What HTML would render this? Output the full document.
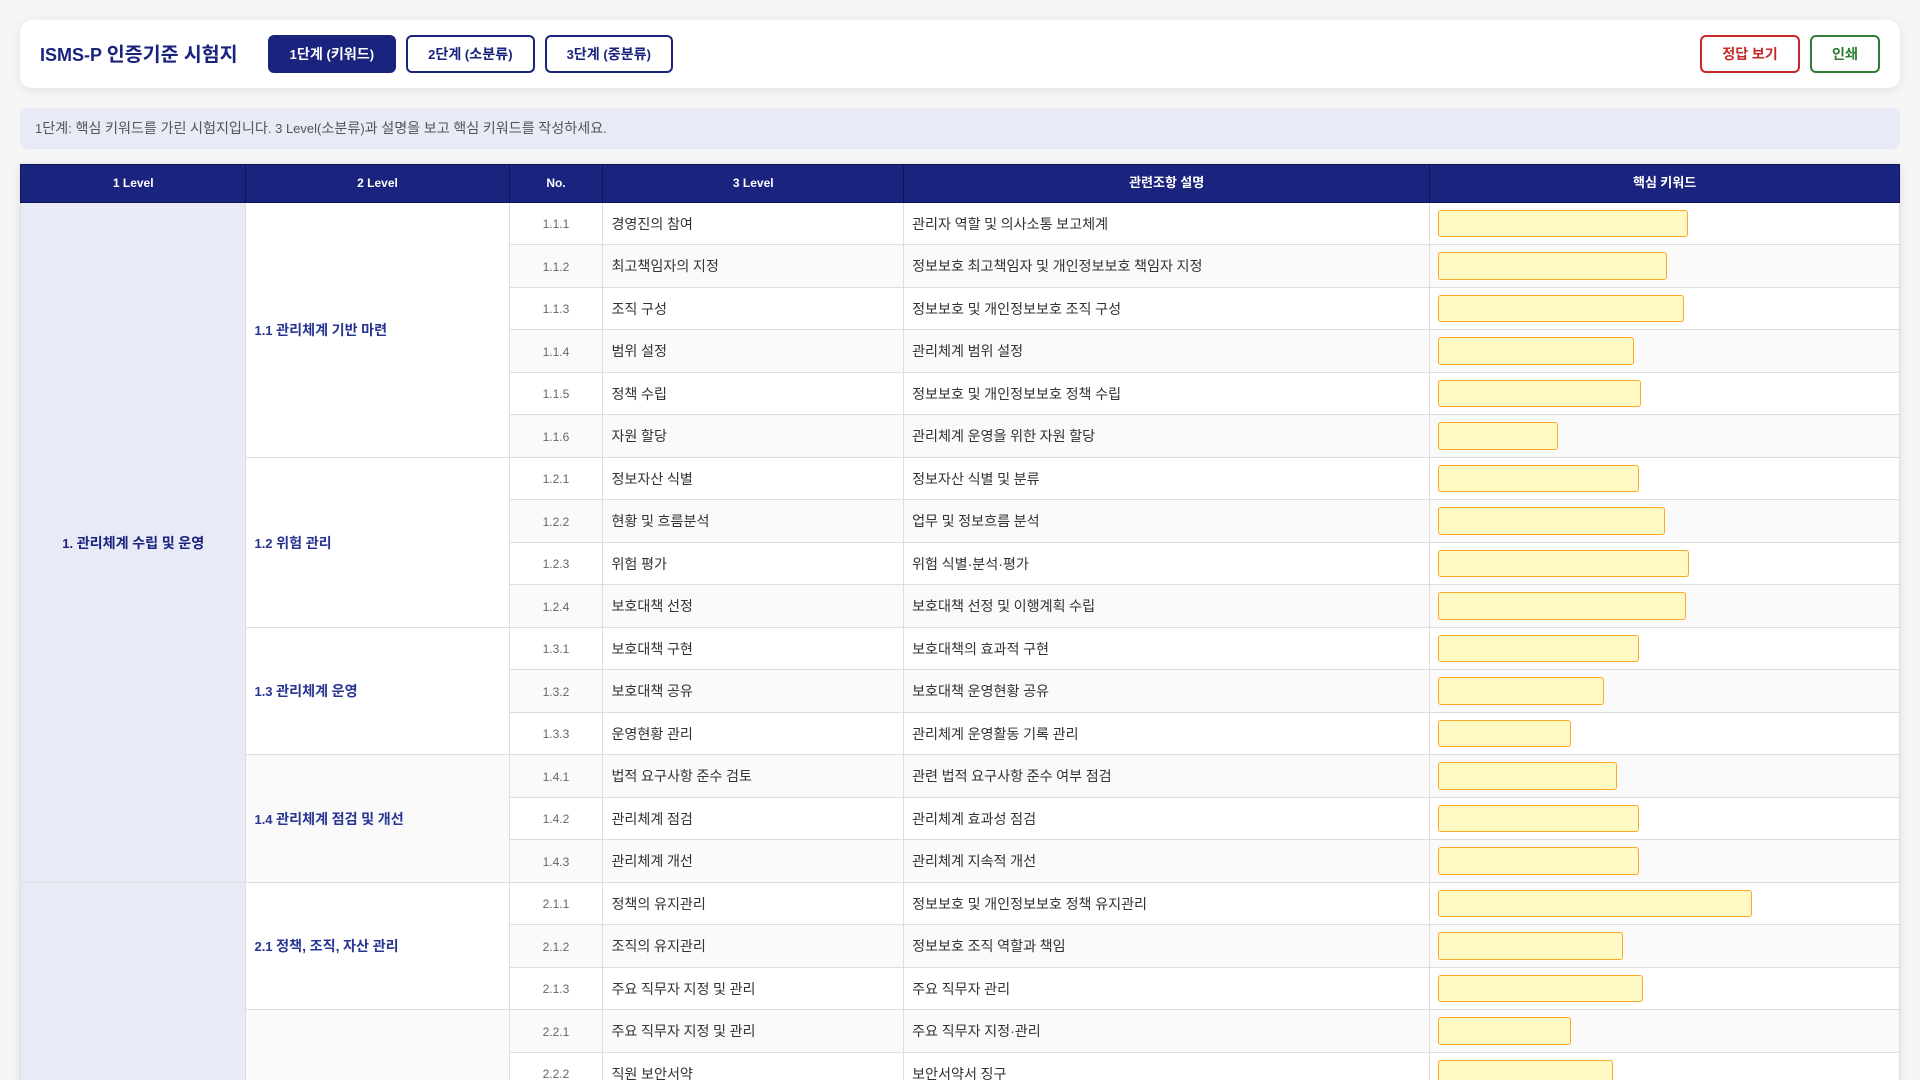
<!DOCTYPE html>
<html lang="ko"><head><meta charset="utf-8"><title>ISMS-P 인증기준 시험지</title>
<style>
*{box-sizing:border-box;margin:0;padding:0}
html,body{width:1920px;height:1080px;overflow:hidden}
body{background:#f5f5f5;padding:20px;font-family:"Liberation Sans","Noto Sans CJK KR",sans-serif;color:#333;font-size:13px}
i{font-style:normal;font-size:1.0865em;word-spacing:-.35px;line-height:1}
.hd{display:flex;align-items:center;height:68px;background:#fff;border-radius:12px;padding:0 20px;box-shadow:0 2px 10px rgba(0,0,0,.08)}
h1{font-size:18px;font-weight:700;color:#1a237e;margin-right:30px;line-height:24px;white-space:nowrap;position:relative;top:.5px}
.b{height:38px;border:2px solid #1a237e;border-radius:6px;background:#fff;color:#1a237e;font:700 13px "Liberation Sans","Noto Sans CJK KR",sans-serif;padding:0 20px;margin-right:10px;white-space:nowrap}
.b.on{background:#1a237e;color:#fff}
.sp{flex:1}
.r{border-color:#c62828;color:#c62828}
.b.r{padding:0 20.3px}
.g{border-color:#2e7d32;color:#2e7d32;margin-right:0}
.info{margin-top:20px;height:41px;line-height:42px;background:#e8eaf6;border-radius:8px;padding:0 15px;color:#555;font-size:13px}
table{margin-top:15px;width:100%;table-layout:fixed;border-collapse:collapse;background:#fff;box-shadow:0 2px 8px rgba(0,0,0,.1)}
th{background:#1a237e;color:#fff;font-size:12px;font-weight:700;border:1px solid #0d1452;height:37.5px;padding:0 8px 1px;text-align:center}
td{border:1px solid #ddd;padding:8px 8px 6px;font-size:13px;color:#333;vertical-align:middle;white-space:nowrap}
tbody tr:nth-child(even){background:#fafafa}
td.l1{background:#e8eaf6;color:#1a237e;font-weight:700;text-align:center}
td.l2{color:#283593;font-weight:700}
td.n{text-align:center;color:#666;font-size:12px}
input{display:block;position:relative;top:-1px;height:27.5px;border:1px solid #ffa726;background:#fff9c4;border-radius:3px;padding:0 8px;font-size:13px;outline:0}
</style></head><body>
<div class="hd"><h1>ISMS-P <i>인증기준 시험지</i></h1><button class="b on">1<i>단계</i> (<i>키워드</i>)</button><button class="b">2<i>단계</i> (<i>소분류</i>)</button><button class="b">3<i>단계</i> (<i>중분류</i>)</button><div class="sp"></div><button class="b r"><i>정답 보기</i></button><button class="b g"><i>인쇄</i></button></div>
<div class="info">1<i>단계</i>: <i>핵심 키워드를 가린 시험지입니다</i>. 3 Level(<i>소분류</i>)<i>과 설명을 보고 핵심 키워드를 작성하세요</i>.</div>
<table><colgroup><col style="width:12%"><col style="width:14%"><col style="width:5%"><col style="width:16%"><col style="width:28%"><col style="width:25%"></colgroup>
<thead><tr><th>1 Level</th><th>2 Level</th><th>No.</th><th>3 Level</th><th><i>관련조항 설명</i></th><th><i>핵심 키워드</i></th></tr></thead>
<tbody>
<tr><td class="l1" rowspan="16">1. <i>관리체계 수립 및 운영</i></td><td class="l2" rowspan="6">1.1 <i>관리체계 기반 마련</i></td><td class="n">1.1.1</td><td><i>경영진의 참여</i></td><td><i>관리자 역할 및 의사소통 보고체계</i></td><td><input style="width:250px"></td></tr>
<tr><td class="n">1.1.2</td><td><i>최고책임자의 지정</i></td><td><i>정보보호 최고책임자 및 개인정보보호 책임자 지정</i></td><td><input style="width:229px"></td></tr>
<tr><td class="n">1.1.3</td><td><i>조직 구성</i></td><td><i>정보보호 및 개인정보보호 조직 구성</i></td><td><input style="width:246px"></td></tr>
<tr><td class="n">1.1.4</td><td><i>범위 설정</i></td><td><i>관리체계 범위 설정</i></td><td><input style="width:196px"></td></tr>
<tr><td class="n">1.1.5</td><td><i>정책 수립</i></td><td><i>정보보호 및 개인정보보호 정책 수립</i></td><td><input style="width:203px"></td></tr>
<tr><td class="n">1.1.6</td><td><i>자원 할당</i></td><td><i>관리체계 운영을 위한 자원 할당</i></td><td><input style="width:120px"></td></tr>
<tr><td class="l2" rowspan="4">1.2 <i>위험 관리</i></td><td class="n">1.2.1</td><td><i>정보자산 식별</i></td><td><i>정보자산 식별 및 분류</i></td><td><input style="width:201px"></td></tr>
<tr><td class="n">1.2.2</td><td><i>현황 및 흐름분석</i></td><td><i>업무 및 정보흐름 분석</i></td><td><input style="width:227px"></td></tr>
<tr><td class="n">1.2.3</td><td><i>위험 평가</i></td><td><i>위험 식별·분석·평가</i></td><td><input style="width:251px"></td></tr>
<tr><td class="n">1.2.4</td><td><i>보호대책 선정</i></td><td><i>보호대책 선정 및 이행계획 수립</i></td><td><input style="width:248px"></td></tr>
<tr><td class="l2" rowspan="3">1.3 <i>관리체계 운영</i></td><td class="n">1.3.1</td><td><i>보호대책 구현</i></td><td><i>보호대책의 효과적 구현</i></td><td><input style="width:201px"></td></tr>
<tr><td class="n">1.3.2</td><td><i>보호대책 공유</i></td><td><i>보호대책 운영현황 공유</i></td><td><input style="width:166px"></td></tr>
<tr><td class="n">1.3.3</td><td><i>운영현황 관리</i></td><td><i>관리체계 운영활동 기록 관리</i></td><td><input style="width:133px"></td></tr>
<tr><td class="l2" rowspan="3">1.4 <i>관리체계 점검 및 개선</i></td><td class="n">1.4.1</td><td><i>법적 요구사항 준수 검토</i></td><td><i>관련 법적 요구사항 준수 여부 점검</i></td><td><input style="width:179px"></td></tr>
<tr><td class="n">1.4.2</td><td><i>관리체계 점검</i></td><td><i>관리체계 효과성 점검</i></td><td><input style="width:201px"></td></tr>
<tr><td class="n">1.4.3</td><td><i>관리체계 개선</i></td><td><i>관리체계 지속적 개선</i></td><td><input style="width:201px"></td></tr>
<tr><td class="l1" rowspan="13">2. <i>보호대책 요구사항</i></td><td class="l2" rowspan="3">2.1 <i>정책, 조직, 자산 관리</i></td><td class="n">2.1.1</td><td><i>정책의 유지관리</i></td><td><i>정보보호 및 개인정보보호 정책 유지관리</i></td><td><input style="width:314px"></td></tr>
<tr><td class="n">2.1.2</td><td><i>조직의 유지관리</i></td><td><i>정보보호 조직 역할과 책임</i></td><td><input style="width:185px"></td></tr>
<tr><td class="n">2.1.3</td><td><i>주요 직무자 지정 및 관리</i></td><td><i>주요 직무자 관리</i></td><td><input style="width:205px"></td></tr>
<tr><td class="l2" rowspan="6">2.2 <i>인적 보안</i></td><td class="n">2.2.1</td><td><i>주요 직무자 지정 및 관리</i></td><td><i>주요 직무자 지정·관리</i></td><td><input style="width:133px"></td></tr>
<tr><td class="n">2.2.2</td><td><i>직원 보안서약</i></td><td><i>보안서약서 징구</i></td><td><input style="width:175px"></td></tr>
<tr><td class="n">2.2.3</td><td><i>보안 인식, 교육 및 훈련</i></td><td><i>보안 인식 및 교육 훈련</i></td><td><input style="width:200px"></td></tr>
<tr><td class="n">2.2.4</td><td><i>퇴직 및 직무변경 관리</i></td><td><i>퇴직 및 직무변경 관리</i></td><td><input style="width:200px"></td></tr>
<tr><td class="n">2.2.5</td><td><i>보안 위반 시 조치</i></td><td><i>보안 위반 시 조치</i></td><td><input style="width:200px"></td></tr>
<tr><td class="n">2.2.6</td><td><i>인적 보안 관리</i></td><td><i>인적 보안 관리</i></td><td><input style="width:200px"></td></tr>
<tr><td class="l2" rowspan="4">2.3 <i>외부자 보안</i></td><td class="n">2.3.1</td><td><i>외부자 현황 관리</i></td><td><i>외부자 현황 관리</i></td><td><input style="width:200px"></td></tr>
<tr><td class="n">2.3.2</td><td><i>외부자 계약 시 보안</i></td><td><i>외부자 계약 시 보안</i></td><td><input style="width:200px"></td></tr>
<tr><td class="n">2.3.3</td><td><i>외부자 보안 이행 관리</i></td><td><i>외부자 보안 이행 관리</i></td><td><input style="width:200px"></td></tr>
<tr><td class="n">2.3.4</td><td><i>외부자 계약 변경 및 만료</i></td><td><i>외부자 계약 변경 및 만료</i></td><td><input style="width:200px"></td></tr>
</tbody></table>
</body></html>
